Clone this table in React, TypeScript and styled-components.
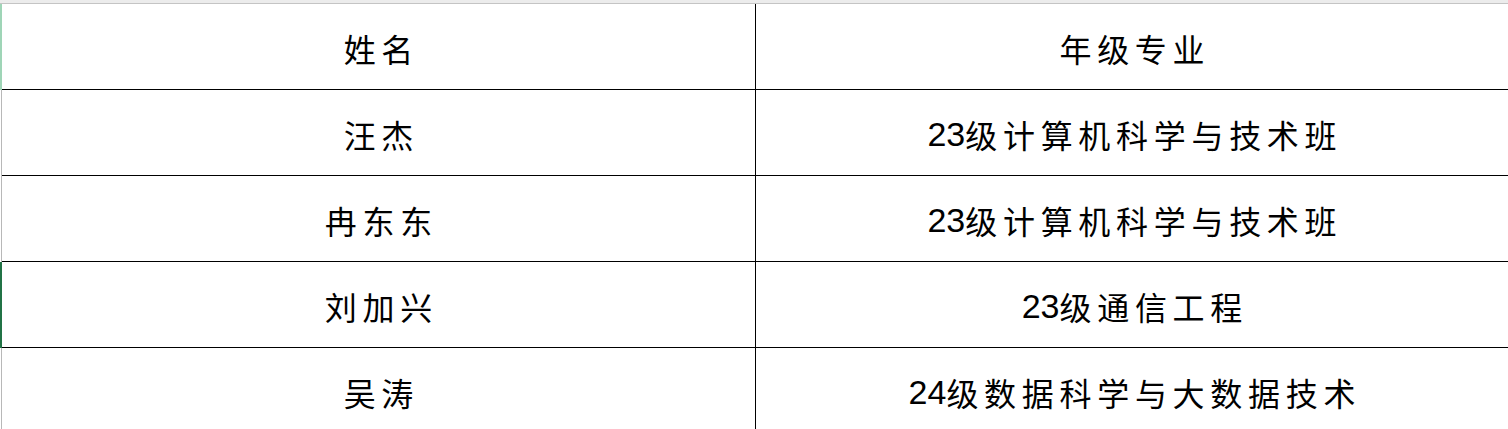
import React from 'react'
import styled, { createGlobalStyle } from 'styled-components'

const GlobalStyle = createGlobalStyle`
  html, body {
    margin: 0;
    padding: 0;
    background: #fff;
  }
  body {
    font-family: "Liberation Sans", "Noto Sans CJK SC", sans-serif;
    overflow: hidden;
  }
`

const Sheet = styled.div`
  width: 1508px;
  display: flex;
  flex-direction: column;
`

const TopStrip = styled.div`
  height: 3px;
  background: #ececec;
  border-bottom: 1px solid #c4c4c4;
`

const Row = styled.div`
  display: grid;
  grid-template-columns: 2px 754px 1fr;
  height: 86px;
`

type Tone = 'plain' | 'header' | 'active'

const Gutter = styled.div<{ $tone: Tone }>`
  box-sizing: border-box;
  background: ${(p) =>
    p.$tone === 'header' ? '#9fd5b7' : p.$tone === 'active' ? '#217346' : '#fff'};
  border-right: ${(p) => (p.$tone === 'plain' ? '1px solid #b8b8b8' : 'none')};
`

const Cell = styled.div<{ $last?: boolean }>`
  box-sizing: border-box;
  display: flex;
  align-items: center;
  justify-content: center;
  padding-top: 3px;
  border-bottom: 1px solid #000;
  border-right: ${(p) => (p.$last ? 'none' : '1px solid #000')};
  font-size: 32px;
  color: #000;
  white-space: nowrap;
`

const Han = styled.span`
  font-family: "Noto Sans CJK SC", sans-serif;
  letter-spacing: 5.7px;
  margin-right: -5.7px;
`

const Num = styled.span`
  font-family: "Liberation Sans", sans-serif;
  font-size: 34px;
`

// digits in Arial widths, Chinese spaced out like the sheet
function CellText({ text }: { text: string }) {
  const parts = text.match(/\d+|\D+/g) || []
  return (
    <>
      {parts.map((part, i) =>
        /\d/.test(part) ? <Num key={i}>{part}</Num> : <Han key={i}>{part}</Han>
      )}
    </>
  )
}

const rows: { name: string; major: string; tone: Tone }[] = [
  { name: '姓名', major: '年级专业', tone: 'header' },
  { name: '汪杰', major: '23级计算机科学与技术班', tone: 'plain' },
  { name: '冉东东', major: '23级计算机科学与技术班', tone: 'plain' },
  { name: '刘加兴', major: '23级通信工程', tone: 'active' },
  { name: '吴涛', major: '24级数据科学与大数据技术', tone: 'plain' },
]

export default function App() {
  return (
    <>
      <GlobalStyle />
      <Sheet>
        <TopStrip />
        {rows.map((r) => (
          <Row key={r.name}>
            <Gutter $tone={r.tone} />
            <Cell>
              <CellText text={r.name} />
            </Cell>
            <Cell $last>
              <CellText text={r.major} />
            </Cell>
          </Row>
        ))}
      </Sheet>
    </>
  )
}
